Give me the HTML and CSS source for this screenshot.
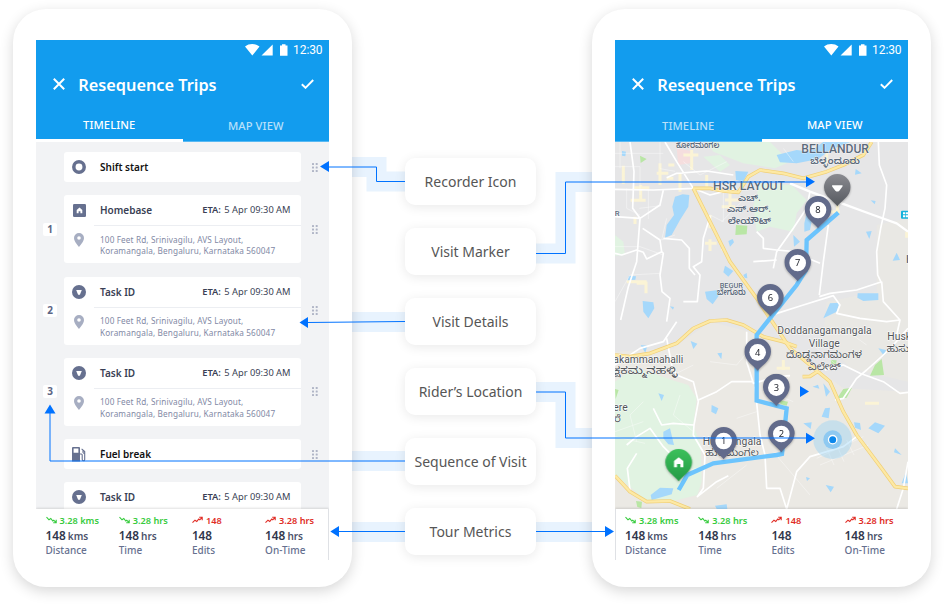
FILE: index.html
```html
<!DOCTYPE html>
<html lang="en">
<head>
<meta charset="utf-8">
<title>Resequence Trips</title>
<link rel="stylesheet" href="styles.css">
</head>
<body>
<svg class="defs" width="0" height="0" aria-hidden="true">
  <defs>
    <symbol id="i-pin" viewBox="0 0 10 14"><path fill="#a7aec2" fill-rule="evenodd" d="M5 0a5 5 0 0 0-5 5c0 3.600 5 9 5 9s5-5.400 5-9a5 5 0 0 0-5-5zm0 3.200a1.800 1.800 0 1 1 0 3.600 1.800 1.800 0 0 1 0-3.600z"/></symbol>
    <symbol id="i-task" viewBox="0 0 14 14"><circle cx="7" cy="7" r="7" fill="#66708f"/><path d="M4.200 4.900h5.600L7.900 9.700H6.100z" fill="#fff"/></symbol>
    <symbol id="i-home" viewBox="0 0 13 13"><rect width="13" height="13" rx="1.300" fill="#66708f"/><path d="M3.700 9.300V6l2.800-2.500L9.300 6v3.300H7.400V7.300H5.600v2z" fill="#fff"/></symbol>
    <symbol id="i-ring" viewBox="0 0 14 14"><circle cx="7" cy="7" r="5.200" fill="none" stroke="#66708f" stroke-width="3.500"/></symbol>
    <symbol id="i-fuel" viewBox="0 0 14 15"><path fill="#66708f" fill-rule="evenodd" d="M1 0h6q1 0 1 1v13.500H0V1q0-1 1-1zm.6 1.500v4.200h4.800V1.500z"/><path d="M8 7h1.300q.9 0 .9 1v4.300q0 1.400 1.300 1.400t1.200-1.400V4.600L9.600 1.800M11 3.300v2.200q.2.900 1.600.9" fill="none" stroke="#66708f" stroke-width="1.100"/></symbol>
    <symbol id="i-drag" viewBox="0 0 6 9"><g fill="#b0b5c6"><rect width="2" height="2" rx=".5"/><rect x="3.700" width="2" height="2" rx=".5"/><rect y="3.500" width="2" height="2" rx=".5"/><rect x="3.700" y="3.500" width="2" height="2" rx=".5"/><rect y="7" width="2" height="2" rx=".5"/><rect x="3.700" y="7" width="2" height="2" rx=".5"/></g></symbol>
    <symbol id="i-down" viewBox="0 0 11 8"><path d="M.5 1.200 3 3.800l1.800-1.300L6.800 5l1-.8 2 2.200M10.200 3.700v3H7.200" fill="none" stroke="#36cb3d" stroke-width="1.100"/></symbol>
    <symbol id="i-up" viewBox="0 0 11 8"><path d="M.5 6.700 3 4.200l1.800 1.200L6.800 3l1 .8L10 1.500M7.200 1.200h3v3" fill="none" stroke="#e02d26" stroke-width="1.100"/></symbol>
    <symbol id="i-status" viewBox="0 0 43 12"><path fill="#fff" d="M0 2.500C4-.8 10.500-.8 14.500 2.500L7.300 11.500zM16.500 11.500 27.700.5v11zM35 1.500h2V.3h3.500v1.200H42.500V11.800H35z"/></symbol>
    <symbol id="i-close" viewBox="0 0 12 12"><path d="m.8.8 10.400 10.400m0-10.400L.8 11.200" fill="none" stroke="#fff" stroke-width="2"/></symbol>
    <symbol id="i-check" viewBox="0 0 13 10"><path d="m.8 5.300 3.700 3.500L12.200 1" fill="none" stroke="#fff" stroke-width="1.900"/></symbol>
    <g id="marker"><path d="M0 71C-6 60-40 42-40 14A40 40 0 0 1 40 14C40 42 6 60 0 71z" transform="translate(0 -16)"/><circle r="25" fill="#fff"/></g>
    <linearGradient id="dest" x2="0" y2="1"><stop stop-color="#8a8b90"/><stop offset="1" stop-color="#55585f"/></linearGradient>
    <linearGradient id="base" x2="0" y2="1"><stop stop-color="#3cc05b"/><stop offset="1" stop-color="#239a46"/></linearGradient>
  </defs>
</svg>

<main class="stage">
  <svg class="bands" viewBox="0 0 944 604" aria-hidden="true">
    <path d="M340 167H376.500V181.500H412M530 253.500H565.500V182H600M340 322H410M530 392H565.500V438H600M340 461H410M340 532H600"/>
  </svg>

  <section class="phone">
    <div class="screen">
      <header class="bar">
        <div class="status"><svg class="signal"><use href="#i-status"/></svg><span>12:30</span></div>
        <div class="title"><svg class="close"><use href="#i-close"/></svg><h1>Resequence Trips</h1><svg class="check"><use href="#i-check"/></svg></div>
        <nav class="tabs"><span class="tab active">TIMELINE</span><span class="tab">MAP VIEW</span></nav>
      </header>
      <div class="timeline">
        <div class="row"><i></i>
          <div class="card"><div class="head"><svg class="ring"><use href="#i-ring"/></svg><b class="dark">Shift start</b></div></div>
          <svg class="drag"><use href="#i-drag"/></svg></div>
        <div class="row"><span class="num">1</span>
          <div class="card"><div class="head"><svg class="home"><use href="#i-home"/></svg><b>Homebase</b><span class="eta"><b>ETA:</b> 5 Apr 09:30 AM</span></div>
            <div class="place"><svg class="pin"><use href="#i-pin"/></svg><p>100 Feet Rd, Srinivagilu, AVS Layout,<br>Koramangala, Bengaluru, Karnataka 560047</p></div></div>
          <svg class="drag"><use href="#i-drag"/></svg></div>
        <div class="row"><span class="num">2</span>
          <div class="card"><div class="head"><svg class="task"><use href="#i-task"/></svg><b>Task ID</b><span class="eta"><b>ETA:</b> 5 Apr 09:30 AM</span></div>
            <div class="place"><svg class="pin"><use href="#i-pin"/></svg><p>100 Feet Rd, Srinivagilu, AVS Layout,<br>Koramangala, Bengaluru, Karnataka 560047</p></div></div>
          <svg class="drag"><use href="#i-drag"/></svg></div>
        <div class="row"><span class="num">3</span>
          <div class="card"><div class="head"><svg class="task"><use href="#i-task"/></svg><b>Task ID</b><span class="eta"><b>ETA:</b> 5 Apr 09:30 AM</span></div>
            <div class="place"><svg class="pin"><use href="#i-pin"/></svg><p>100 Feet Rd, Srinivagilu, AVS Layout,<br>Koramangala, Bengaluru, Karnataka 560047</p></div></div>
          <svg class="drag"><use href="#i-drag"/></svg></div>
        <div class="row"><i></i>
          <div class="card"><div class="head"><svg class="fuel"><use href="#i-fuel"/></svg><b class="dark">Fuel break</b></div></div>
          <svg class="drag"><use href="#i-drag"/></svg></div>
        <div class="row"><i></i>
          <div class="card"><div class="head"><svg class="task"><use href="#i-task"/></svg><b>Task ID</b><span class="eta"><b>ETA:</b> 5 Apr 09:30 AM</span></div></div></div>
      </div>
      <footer class="metrics edge-right">
        <div class="metric good"><span><svg><use href="#i-down"/></svg>3.28 kms</span><strong>148 <small>kms</small></strong><em>Distance</em></div>
        <div class="metric good"><span><svg><use href="#i-down"/></svg>3.28 hrs</span><strong>148 <small>hrs</small></strong><em>Time</em></div>
        <div class="metric bad"><span><svg><use href="#i-up"/></svg>148</span><strong>148</strong><em>Edits</em></div>
        <div class="metric bad"><span><svg><use href="#i-up"/></svg>3.28 hrs</span><strong>148 <small>hrs</small></strong><em>On-Time</em></div>
      </footer>
    </div>
  </section>

  <section class="labels">
    <div class="label">Recorder Icon</div>
    <div class="label">Visit Marker</div>
    <div class="label">Visit Details</div>
    <div class="label">Rider’s Location</div>
    <div class="label">Sequence of Visit</div>
    <div class="label">Tour Metrics</div>
  </section>

  <section class="phone">
    <div class="screen">
      <header class="bar">
        <div class="status"><svg class="signal"><use href="#i-status"/></svg><span>12:30</span></div>
        <div class="title"><svg class="close"><use href="#i-close"/></svg><h1>Resequence Trips</h1><svg class="check"><use href="#i-check"/></svg></div>
        <nav class="tabs"><span class="tab">TIMELINE</span><span class="tab active">MAP VIEW</span></nav>
      </header>
      <svg class="map" viewBox="15 21 879 1101">
        <rect x="15" y="21" width="879" height="1101" fill="#e6e6e7"/>
        <path fill="#ebe9e4" d="M15 650 190 640 300 560 420 590 560 640 620 700 700 760 894 770V1122H15z"/>
        <path fill="#e9e8e4" d="M894 250 800 270 800 470 650 500 640 610 720 700 894 740z"/>
        <!-- parks -->
        <g fill="#e1f3e2">
          <path d="M15 740 70 700 130 715 185 735 235 750 260 790 250 870 272 930 275 1040 262 1080 190 1098 110 1100 60 1055 15 1020z"/>
          <path d="M290 21H480L540 80 495 100 400 85 310 50z"/>
          <path d="M450 145 545 150 590 195 560 235 550 290 480 275 440 290 430 210z"/>
          <path d="M15 300 40 320 45 360 15 362zM280 65 330 60 360 90 330 110z"/>
        </g>
        <g fill="#b9e6a5">
          <path d="M90 62 110 72 92 84zM378 270 412 272 410 298 376 300zM15 762 26 765 17 792zM78 1098 96 1100 94 1119 82 1116z"/>
          <path d="M795 690 815 672 822 720 780 722zM680 792 700 762 726 758 710 788zM508 795 534 800 530 812 512 808zM662 675 680 676 678 688 664 686z"/>
        </g>
        <path fill="#f5dede" d="M200 40 245 48 240 85 205 90z"/>
        <!-- built-up patches -->
        <g fill="none" stroke="#fbf4d6" stroke-width="9">
          <path d="M40 92v55M70 158h48M92 150v45M62 196h45M150 85v65M140 115h35M170 130h20M210 115v55M175 90h18M290 120v40M220 60h45M245 45v60M300 240v40M80 445h28v30M50 440h60M75 245v22M285 325h35M300 313v35M335 340l13 12M345 195h45M360 170v50M335 215h40M765 805h42M655 230h35M682 200v35M650 40v60M500 700h40M520 675v30M890 290v18"/>
        </g>
        <!-- lakes -->
        <g fill="#a5d8fb">
          <path d="M195 185 218 178 238 180 235 215 210 255 185 300 165 308 170 270 192 240 187 215z"/>
          <path d="M500 60 560 45 600 50 640 21 720 22 660 45 625 72 610 75 560 85 510 82z"/>
          <path d="M376 108 415 110 400 140 378 135zM98 498 130 502 133 520 115 550 100 530zM285 470 325 465 328 480 308 508 290 492zM345 392 370 408 355 425 340 412zM57 422 78 424 76 434 52 436zM355 318 368 312 372 322 360 335zM36 48 48 50 46 64 36 62zM180 514l12 2-3 8zM400 420l10-6 2 16-8-2z"/>
          <path d="M583 265 590 235 607 250 600 285 583 290zM550 300 570 320 552 335zM737 102 755 115 735 119zM782 196l15 2-3 10zM768 290 785 288 778 312zM860 353 870 375 848 377zM743 475 805 475 805 495 760 498 742 488zM640 550 660 505 688 503 680 530z"/>
          <path d="M160 890 180 880 192 930 175 928 160 910zM122 1080 150 1058 190 1060 185 1078 125 1095zM145 775 162 780 155 798zM305 810 325 820 318 838 304 830zM242 618 262 626 250 642zM322 655l14-2-2 20zM92 630 112 632 106 653zM315 1112 350 1108 352 1122 320 1122z"/>
          <path d="M775 880 795 862 825 872 805 895zM732 862 750 864 753 885 735 878zM855 940 875 960 852 952zM647 1050 672 1055 662 1072zM635 845 645 820 660 818 656 850zM580 865 605 862 602 882zM640 745 660 770 648 785zM608 755l16-6 4 12zM805 640 828 645 822 662zM588 1026l12 4-9 8zM888 1010 894 1045 875 1045z"/>
        </g>
        <!-- minor streets -->
        <g fill="none" stroke="#fff" stroke-width="2" opacity=".6">
          <path d="M15 55H160M30 21V100M15 95H90V180M50 160v60l40 20M88 220l65-8M15 335H90L160 360M115 162v90M150 21v80l45 8M220 80l50 40 80-40M340 160v100l-40-20M395 200l-60 60M15 500 60 420 150 415M170 250l-15 65 40-15M520 40l30 40M610 700l90-12M620 970l140-65M630 990l145-60M650 940l22 50M680 930l22 50M710 915l22 45M15 905l90 20M190 720l60-30M380 850l60-20M320 1060l90-70M490 950l110 130"/>
          <path d="M210 780l-20 60 60 50M100 800l-40 40 20 80M300 680l80 10 50-60M100 860l-85 30M260 1000l-80 20M540 720l-40 60 50 20M620 640l60 50M700 580l70 50"/>
        </g>
        <!-- roads -->
        <g fill="none" stroke="#fff" stroke-width="5" stroke-linejoin="round">
          <path d="M15 163 130 165 250 160M165 21 200 80 250 160M170 128 200 115 290 108 370 120M60 21 72 110 68 220 90 250 80 380 55 455 32 555M15 245 90 250 150 210 160 165M98 280 150 315 155 350 160 355 150 420 156 470 180 490 170 560M15 355 35 360 80 345 100 352 110 372 155 350M160 310 215 315 238 340 238 400 255 420M290 245 300 245 280 310 275 380 250 395 270 420 262 500 220 500M250 160 300 180 380 160M440 290 460 310 460 340 500 345 555 350 590 368 630 385"/>
          <path stroke-width="7" d="M540 145 600 170 695 205 790 240 860 265 894 290"/>
          <path d="M600 170 590 220 550 280 500 350 490 400M655 270 640 380 628 480M628 485 660 475 740 465 815 440M815 445 803 420 800 350 812 280 825 220 830 150 808 90 805 21M480 542 580 510 670 482 690 510 680 535 750 550 830 560 870 555M815 440 820 500 870 555 860 600M430 380 500 375"/>
          <path d="M15 690 90 640 160 620 200 560M170 610 185 690 200 720 250 740 265 800 252 870 250 900 285 960 280 1060 262 1085 320 1040 355 1022M265 795 320 770 365 740 430 740M130 820 155 870 190 865 250 870M50 930 80 905 120 880 160 935 180 955M60 1065 52 1000 80 955M435 755 450 900 465 960 470 1060 510 1060 530 1122M410 590 410 680 430 745 500 725 540 722M530 1122 560 1010 600 965 700 935 740 905M675 795 700 790 740 730 770 705 820 660 850 630 894 580M645 705 700 690 750 715 820 740 870 775 894 772M880 1060 860 1122M894 980 880 1060"/>
        </g>
        <!-- highways -->
        <g fill="none" stroke="#f0cf78" stroke-width="11" stroke-linejoin="round">
          <path d="M250 160 360 380 440 490 540 640 660 740 700 830 740 900 815 1000 855 1055 894 1060"/>
          <path d="M250 160 300 160 340 168 385 172 415 125 450 105 520 115 580 130 650 110 700 90 760 60 785 21"/>
          <path d="M15 660 60 665 120 655 200 625 250 580 300 558 350 555 400 570 460 605 520 620 560 635M15 1022 60 1070 110 1100 180 1098 240 1122M578 725 600 724 625 708"/>
        </g>
        <g fill="none" stroke="#fde9a4" stroke-width="7" stroke-linejoin="round">
          <path d="M250 160 360 380 440 490 540 640 660 740 700 830 740 900 815 1000 855 1055 894 1060"/>
          <path d="M250 160 300 160 340 168 385 172 415 125 450 105 520 115 580 130 650 110 700 90 760 60 785 21"/>
          <path d="M15 660 60 665 120 655 200 625 250 580 300 558 350 555 400 570 460 605 520 620 560 635M15 1022 60 1070 110 1100 180 1098 240 1122M578 725 600 724 625 708"/>
        </g>
        <!-- place names -->
        <g class="town">
          <text x="309" y="165" textLength="216" lengthAdjust="spacingAndGlyphs">HSR LAYOUT</text>
          <text x="574" y="54" textLength="203" lengthAdjust="spacingAndGlyphs">BELLANDUR</text>
        </g>
        <g class="kn bold">
          <text x="198" y="39" textLength="130" lengthAdjust="spacingAndGlyphs">ಕೋರಮಂಗಲ</text>
          <text x="601" y="86" textLength="149" lengthAdjust="spacingAndGlyphs">ಬೆಳ್ಳಂದೂರು</text>
          <text x="384" y="197" textLength="68" lengthAdjust="spacingAndGlyphs">ಎಚ್.</text>
          <text x="351" y="231" textLength="132" lengthAdjust="spacingAndGlyphs">ಎಸ್.ಆರ್.</text>
          <text x="353" y="266" textLength="130" lengthAdjust="spacingAndGlyphs">ಲೇಯೌಟ್</text>
          <text x="321" y="481" textLength="86" lengthAdjust="spacingAndGlyphs">ಬೇಗೂರು</text>
        </g>
        <g class="small-town"><text x="329" y="458" textLength="70" lengthAdjust="spacingAndGlyphs">BEGUR</text><text x="14" y="242">R</text><text x="888" y="383" font-size="34">H</text></g>
        <g class="village">
          <text x="502" y="597" textLength="283">Doddanagamangala</text>
          <text x="596" y="635" textLength="93">Village</text>
          <text x="832" y="616">Husk</text>
          <text x="10" y="684" textLength="210">akammanahalli</text>
          <text x="10" y="829">ere</text>
          <text x="278" y="931" textLength="176">Hulimangala</text>
        </g>
        <g class="kn">
          <text x="528" y="668" textLength="228" lengthAdjust="spacingAndGlyphs">ದೊಡ್ಡನಾಗಮಂಗಳ</text>
          <text x="594" y="706" textLength="98" lengthAdjust="spacingAndGlyphs">ವಿಲೇಜ್</text>
          <text x="830" y="650">ಹುಸು</text>
          <text x="8" y="718" textLength="194" lengthAdjust="spacingAndGlyphs">ಕ್ಷಕಮ್ಮನಹಳ್ಳಿ</text>
          <text x="13" y="862">ರೆ</text>
          <text x="286" y="964" textLength="160" lengthAdjust="spacingAndGlyphs">ಹುಲಿಮಂಗಲ</text>
        </g>
        <g><rect x="873" y="227" width="30" height="24" rx="3" fill="#16b3dc"/><path d="M879 232h7v6h-7zm9 0h7v6h-7zm-9 9h7v6h-7zm9 0h7v6h-7z" fill="#fff"/></g>
        <!-- planned route -->
        <path d="M206 1065 232 1020 310 985 500 960 516 957 530 820 440 797V600L560 450 588 405 590 315 685 233" fill="none" stroke="#6cc4fd" stroke-width="13"/>
        <!-- rider -->
        <circle cx="668" cy="914" r="58" fill="#8fd0f8" opacity=".38"/>
        <circle cx="668" cy="914" r="28" fill="#7fc3f3" opacity=".8"/>
        <circle cx="668" cy="914" r="12.500" fill="#0d88ec" stroke="#fff" stroke-width="4"/>
        <!-- stops -->
        <g class="stops">
          <g transform="translate(624 225)"><use href="#marker"/><text y="10">8</text></g>
          <g transform="translate(563 384)"><use href="#marker"/><text y="10">7</text></g>
          <g transform="translate(481 489)"><use href="#marker"/><text y="10">6</text></g>
          <g transform="translate(443 652)"><use href="#marker"/><text y="10">4</text></g>
          <g transform="translate(499 758)"><use href="#marker"/><text y="10">3</text></g>
          <g transform="translate(514 897)"><use href="#marker"/><text y="10">2</text></g>
          <g transform="translate(341 918)"><use href="#marker"/><text y="10">1</text></g>
          <g transform="translate(682 159)"><path fill="url(#dest)" d="M0 55C-6 44-40 26-40-2A40 40 0 0 1 40-2C40 26 6 44 0 55z"/><path d="M-14-8h28Q18-8 15-4L6 8Q0 13-6 8L-15-4Q-18-8-14-8z" fill="#fff"/></g>
          <g transform="translate(206 984)"><path fill="url(#base)" d="M0 55C-6 44-40 26-40-2A40 40 0 0 1 40-2C40 26 6 44 0 55z"/><path d="M-14 13V-6L0-17 14-6V13H5V3H-5V13z" fill="#fff"/></g>
        </g>
      </svg>
      <footer class="metrics edge-left">
        <div class="metric good"><span><svg><use href="#i-down"/></svg>3.28 kms</span><strong>148 <small>kms</small></strong><em>Distance</em></div>
        <div class="metric good"><span><svg><use href="#i-down"/></svg>3.28 hrs</span><strong>148 <small>hrs</small></strong><em>Time</em></div>
        <div class="metric bad"><span><svg><use href="#i-up"/></svg>148</span><strong>148</strong><em>Edits</em></div>
        <div class="metric bad"><span><svg><use href="#i-up"/></svg>3.28 hrs</span><strong>148 <small>hrs</small></strong><em>On-Time</em></div>
      </footer>
    </div>
  </section>

  <svg class="arrows" viewBox="0 0 944 604" aria-hidden="true">
    <path class="line" d="M328 167H376.500V181.500H405M536 253.500H565.500V182H807M405 321.500 307 322.500M536 392H565.500V438H807M405 461H50V413M339 531.500H405M536 531.500H606"/>
    <path class="tip" d="M320 166.500l9-5.500v11zM815 181.800l-9-5.500v11zM299.500 322.500l8.500-5.500v11zM809 391.500l-9-5.500v11zM815 438.300l-9-5.500v11zM50 404.500l5.500 9h-11zM330.300 531.500l8.700-5.500v11zM614 531.500l-9-5.500v11z"/>
  </svg>
</main>
</body>
</html>
```
FILE: styles.css
```css
* { box-sizing: border-box; }

body {
  margin: 0;
  background: #fff;
  font-family: "Noto Sans", "Open Sans", sans-serif;
  color: #3a3f55;
}

.defs { position: absolute; }

.stage {
  position: relative;
  display: grid;
  grid-template-columns: 339px 131px 339px;
  column-gap: 53px;
  width: 944px;
  height: 604px;
  padding: 9px 13px 17px;
  overflow: hidden;
}
.labels + .phone { margin-left: 3px; margin-right: -3px; }

.bands, .arrows {
  position: absolute;
  inset: 0;
  width: 944px;
  height: 604px;
  pointer-events: none;
}
.bands path { fill: none; stroke: #e8f3fe; stroke-width: 20; }
.arrows { z-index: 3; }
.line { fill: none; stroke: #0072ff; stroke-width: 1; }
.tip { fill: #0072ff; }

.phone {
  position: relative;
  z-index: 1;
  padding: 31px 23px 27px;
  border-radius: 33px;
  background: #fff;
  box-shadow: 0 4px 14px rgba(0, 0, 0, .16);
}

.screen {
  display: flex;
  flex-direction: column;
  width: 293px;
  height: 520px;
  overflow: hidden;
}

.bar {
  display: flex;
  flex-direction: column;
  height: 102px;
  background: #129cee;
  color: #fff;
}
.status {
  display: flex;
  justify-content: flex-end;
  align-items: center;
  gap: 5.500px;
  height: 20px;
  padding-right: 6.500px;
  font: 400 12px/20px Roboto, sans-serif;
  letter-spacing: -.1px;
}
.signal { width: 43px; height: 12px; }
.title { display: flex; align-items: center; height: 48px; padding: 0 15px 0 17px; }
.close { width: 12px; height: 12px; }
.check { width: 13px; height: 10px; margin-left: auto; }
h1 { margin: 1px 0 0 13.300px; font-size: 16.300px; line-height: 24px; font-weight: 600; }
.tabs { display: flex; flex: 1; }
.tab {
  flex: 1;
  padding-top: 9px;
  border-bottom: 1px solid #58b9f3;
  color: #b9e0fa;
  font-size: 11.200px;
  font-weight: 500;
  line-height: 17px;
  letter-spacing: .1px;
  text-align: center;
}
.tab.active { padding-top: 8px; border-bottom: 3.500px solid #fff; color: #fff; }

.timeline {
  display: flex;
  flex-direction: column;
  gap: 13.300px;
  height: 367px;
  padding-top: 10px;
  background: #f2f3f5;
  overflow: hidden;
}
.row {
  display: grid;
  grid-template-columns: 28px 237px 28px;
  align-items: center;
  justify-items: center;
  flex: none;
}
.num {
  width: 14px;
  height: 13px;
  border-radius: 2px;
  background: #fff;
  color: #5d6685;
  font-size: 10px;
  font-weight: 700;
  line-height: 13px;
  text-align: center;
}
.drag { width: 6px; height: 9px; }
.card { width: 237px; border-radius: 3px; background: #fff; }
.head {
  display: grid;
  grid-template-columns: 30px 1fr auto;
  align-items: center;
  height: 30px;
  padding-right: 10.500px;
}
.head > svg { justify-self: center; }
.head > b { padding-left: 6px; font-size: 10px; font-weight: 600; }
.head > b.dark { color: #111; }
.ring, .task { width: 14px; height: 14px; }
.home { width: 13px; height: 13px; }
.fuel { width: 14px; height: 15px; }
.eta { margin-top: -1px; font-size: 9.300px; }
.eta b { margin-right: 1px; font-weight: 600; }
.place { display: grid; grid-template-columns: 30px 1fr; height: 38px; }
.pin { width: 10px; height: 14px; margin: 8px 0 0 10px; }
.place p {
  margin: 0;
  padding: 7.500px 0 0 6px;
  border-top: 1px solid #eceef2;
  color: #8289a5;
  font-size: 8.200px;
  line-height: 11.500px;
  letter-spacing: .135px;
  white-space: nowrap;
}

.metrics {
  display: grid;
  grid-template-columns: repeat(4, 73.200px);
  position: relative;
  z-index: 1;
  height: 51px;
  padding: 3.500px 0 0 9.500px;
  background: #fff;
  box-shadow: 0 -1px 2px rgba(0, 0, 0, .12);
}
.edge-right { border-right: 1px solid #dfe1e5; }
.edge-left { border-left: 1px solid #dfe1e5; padding-left: 9px; }
.metric { display: flex; flex-direction: column; white-space: nowrap; }
.metric span { display: flex; align-items: center; height: 15px; font-size: 9.200px; font-weight: 600; }
.metric span svg { width: 11px; height: 8px; margin-right: 3px; }
.metric strong { height: 15px; font-size: 11.800px; line-height: 15px; font-weight: 600; color: #30364b; }
.metric small { margin-left: -1px; font-size: 10px; color: #4b526b; }
.metric em { font-size: 10px; line-height: 15px; font-weight: 500; font-style: normal; color: #66708f; }
.good span { color: #36cb3d; }
.bad span { color: #e02d26; }

.labels { display: flex; flex-direction: column; gap: 23px; padding-top: 149px; z-index: 2; }
.label {
  height: 47px;
  border-radius: 10px;
  background: #fff;
  box-shadow: 0 2px 12px rgba(0, 0, 0, .09);
  color: #565656;
  font-size: 14px;
  line-height: 48px;
  text-align: center;
  white-space: nowrap;
}

.map { display: block; width: 293px; height: 367px; }
.map text { font-family: Roboto, "Noto Sans", sans-serif; }
.town text { font-size: 37px; font-weight: 500; fill: #5c6b7c; stroke: #fff; stroke-width: 2; paint-order: stroke; }
.small-town { font-size: 23px; font-weight: 500; fill: #5c6b7c; stroke: #fff; stroke-width: 2; paint-order: stroke; }
.village text { font-size: 31px; fill: #505458; stroke: #fff; stroke-width: 3; paint-order: stroke; }
.map .kn text { font-family: "Noto Sans Kannada", "Noto Sans", sans-serif; font-size: 30px; fill: #505458; stroke: #fff; stroke-width: 2; paint-order: stroke; }
.map .kn.bold text { font-size: 27px; fill: #5c6b7c; font-weight: 600; }
.stops { fill: #626b8b; filter: drop-shadow(0 3px 3px rgba(0, 0, 0, .3)); }
.map .stops text { fill: #23262f; font-size: 28px; text-anchor: middle; font-family: "Noto Sans", sans-serif; }
```
